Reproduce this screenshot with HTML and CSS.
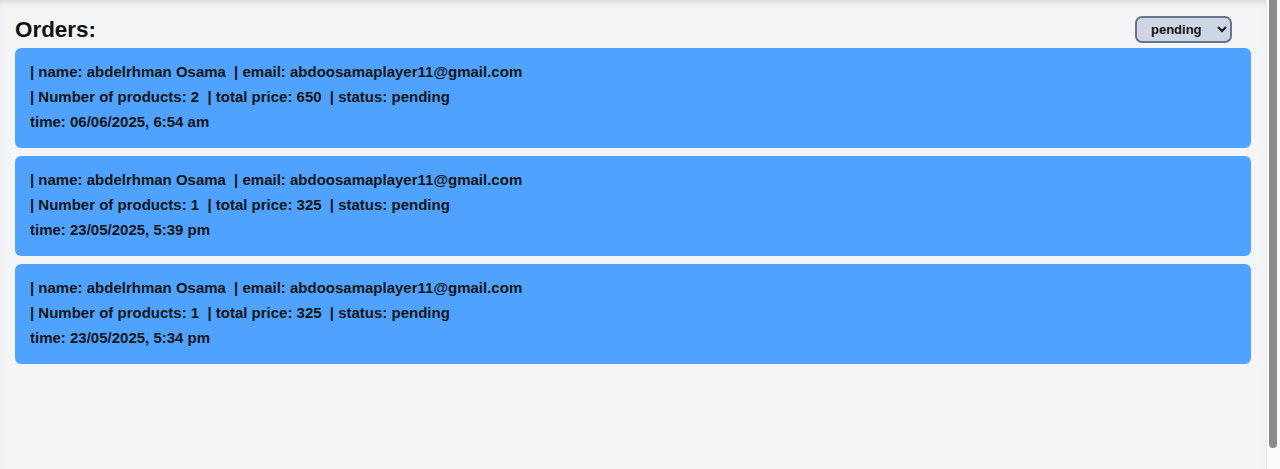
FILE: index.html
```html
<!DOCTYPE html>
<html lang="en">
<head>
    <meta charset="UTF-8">
    <meta name="viewport" content="width=device-width, initial-scale=1.0">
    <title>Orders</title>
    <link rel="stylesheet" href="styles.css">
</head>
<body>
    <div class="app">
        <main class="orders-page">
            <div class="orders-header">
                <h2>Orders:</h2>
                <select class="status-filter">
                    <option value="pending" selected>pending</option>
                    <option value="shipped">shipped</option>
                    <option value="delivered">delivered</option>
                </select>
            </div>

            <div class="order-list">
                <div class="order-card">
                    <p><span class="field">| name: abdelrhman Osama</span> <span class="field">| email: abdoosamaplayer11@gmail.com</span></p>
                    <p><span class="field">| Number of products: 2</span> <span class="field">| total price: 650</span> <span class="field">| status: pending</span></p>
                    <p>time: 06/06/2025, 6:54 am</p>
                </div>

                <div class="order-card">
                    <p><span class="field">| name: abdelrhman Osama</span> <span class="field">| email: abdoosamaplayer11@gmail.com</span></p>
                    <p><span class="field">| Number of products: 1</span> <span class="field">| total price: 325</span> <span class="field">| status: pending</span></p>
                    <p>time: 23/05/2025, 5:39 pm</p>
                </div>

                <div class="order-card">
                    <p><span class="field">| name: abdelrhman Osama</span> <span class="field">| email: abdoosamaplayer11@gmail.com</span></p>
                    <p><span class="field">| Number of products: 1</span> <span class="field">| total price: 325</span> <span class="field">| status: pending</span></p>
                    <p>time: 23/05/2025, 5:34 pm</p>
                </div>
            </div>
        </main>

        <div class="scroll-track">
            <div class="scroll-thumb"></div>
        </div>
    </div>
</body>
</html>
```

FILE: styles.css
```css
/* Reset */
* {
    margin: 0;
    padding: 0;
    box-sizing: border-box;
    font-family: 'Liberation Sans', Arial, sans-serif;
}

body {
    background: #f3f4f6;
    color: #111;
    height: 100vh;
    overflow: hidden;
}

.app {
    display: flex;
    height: 100vh;
}

/* Page content */
.orders-page {
    flex: 1;
    padding: 14px 15px 0 15px;
    box-shadow: inset 0 5px 6px -3px rgba(0, 0, 0, 0.12);
}

.orders-header {
    display: flex;
    justify-content: space-between;
    align-items: center;
    padding-right: 19px;
    height: 32px;
    margin-bottom: 2px;
}

.orders-header h2 {
    font-size: 22.4px;
    font-weight: 700;
}

.status-filter {
    width: 97px;
    height: 27px;
    padding: 0 6px 0 10px;
    font-size: 13px;
    font-weight: 700;
    color: #111;
    background: #cdd6e2;
    border: 2px solid #66758c;
    border-radius: 7px;
    margin-top: -1px;
}

.order-list {
    display: flex;
    flex-direction: column;
    gap: 8px;
}

.order-card {
    background: #4fa3ff;
    border-radius: 6px;
    padding: 11px 15px 14px;
}

.order-card p {
    font-size: 15px;
    font-weight: 700;
    line-height: 25px;
    color: #151515;
}

.field {
    margin-right: 4px;
}

/* Scrollbar column */
.scroll-track {
    width: 14px;
    background: #fbfbfb;
    border-left: 1px solid #ececec;
}

.scroll-thumb {
    width: 8px;
    height: 448px;
    margin-left: 2px;
    background: #8a8a8a;
    border-radius: 0 0 4px 4px;
}
```
